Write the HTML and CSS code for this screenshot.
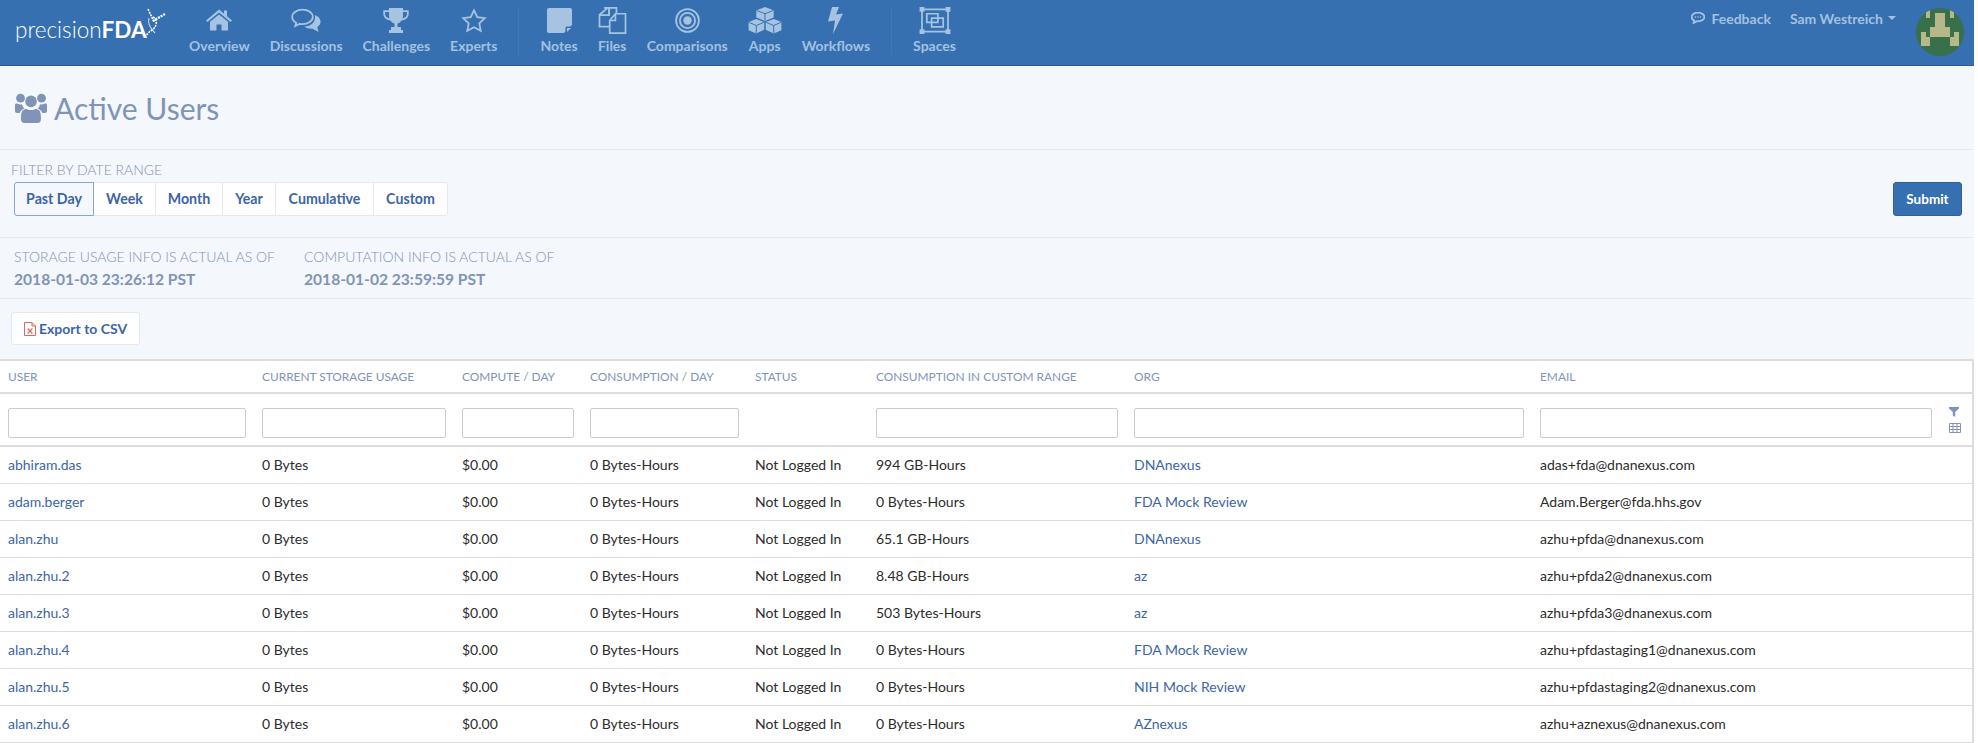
FILE: index.html
```html
<!DOCTYPE html>
<html lang="en">
<head>
  <meta charset="UTF-8">
  <title>precisionFDA - Active Users</title>
  <link rel="stylesheet" href="styles.css">
</head>
<body>

<div class="page">

  <nav class="navbar">
    <a class="brand">
      <span class="brand-light">precision</span><span class="brand-bold">FDA</span>
      <svg class="brand-mark" viewBox="0 0 22 30" width="22" height="30">
        <g fill="none" stroke="#fff" stroke-width="1.6">
          <path d="M4 1 L10 14" stroke-dasharray="2 1"/>
          <path d="M21 6 L9 13" stroke-width="2.2" stroke-dasharray="2 1"/>
          <path d="M9 9 C14 12 13 19 8 22 C5 24 3 26 1 29" stroke-dasharray="2 1"/>
          <path d="M5 10 C3 16 7 21 11 25" stroke-width="1.2" opacity=".7"/>
        </g>
      </svg>
    </a>

    <div class="nav-group">
      <a class="nav-item">
        <svg class="nav-icon" viewBox="0 0 26 22" width="26" height="22">
          <path class="solid" d="M13 0 L18 4.2 V1 H21 V6.8 L26 11 L24.6 12.4 L13 3 L1.4 12.4 L0 11 Z"/>
          <path class="solid" d="M13 5 L22 12.3 V21 H15.5 V15 H10.5 V21 H4 V12.3 Z"/>
        </svg>
        <span>Overview</span>
      </a>
      <a class="nav-item">
        <svg class="nav-icon" viewBox="0 0 30 24" width="30" height="24">
          <path class="line" d="M11.5 1.2 C5.8 1.2 1.2 4.4 1.2 8.4 C1.2 10.8 2.8 12.9 5.2 14.2 L4.2 17.6 L8.8 15.3 C9.7 15.5 10.6 15.6 11.5 15.6 C17.2 15.6 21.8 12.4 21.8 8.4 C21.8 4.4 17.2 1.2 11.5 1.2 Z"/>
          <path class="solid" d="M24 6.5 C27.4 8 29.6 10.4 29.6 13.2 C29.6 15.4 28.2 17.3 26.2 18.6 L27.6 23.4 L21.6 20.2 C18.6 20.4 15.4 19.6 13.4 18 C19.6 18 25 14 24 6.5 Z"/>
        </svg>
        <span>Discussions</span>
      </a>
      <a class="nav-item">
        <svg class="nav-icon" viewBox="0 0 26 25" width="26" height="25">
          <path class="solid" d="M6 0 H20 V8 C20 12 17 15 14.5 15.6 V19 H18 V22 H20 V25 H6 V22 H8 V19 H11.5 V15.6 C9 15 6 12 6 8 Z"/>
          <path class="line" d="M6 3.2 H1.2 V6 C1.2 9 4 11 7.5 11.6 M20 3.2 H24.8 V6 C24.8 9 22 11 18.5 11.6" stroke-width="2"/>
        </svg>
        <span>Challenges</span>
      </a>
      <a class="nav-item">
        <svg class="nav-icon" viewBox="0 0 26 25" width="26" height="25">
          <path class="line" d="M13 2.4 L16.3 9.2 L23.8 10.2 L18.3 15.4 L19.7 22.8 L13 19.2 L6.3 22.8 L7.7 15.4 L2.2 10.2 L9.7 9.2 Z" stroke-width="1.9"/>
        </svg>
        <span>Experts</span>
      </a>
    </div>

    <div class="nav-group">
      <a class="nav-item">
        <svg class="nav-icon" viewBox="0 0 25 25" width="25" height="25">
          <path class="solid" d="M2 0 H23 C24.2 0 25 .8 25 2 V17 L17 25 H2 C.8 25 0 24.2 0 23 V2 C0 .8 .8 0 2 0 Z"/>
          <path class="cut" d="M25 18.5 H20 C19 18.5 18.5 19 18.5 20 V25 H25 Z"/>
          <path class="solid" d="M24 20 L20 24 V20 Z"/>
        </svg>
        <span>Notes</span>
      </a>
      <a class="nav-item">
        <svg class="nav-icon" viewBox="0 0 29 28" width="29" height="28">
          <path class="line" d="M11 8.5 V.9 H18.6 V7 M5.8 .9 H11 M9.5 .9 L1 8 V20.4 H11" stroke-width="1.6"/>
          <path class="line" d="M11 .9 V8.4 H1" stroke-width="1.2"/>
          <path class="line" d="M17.5 7 H28 V27 H11.6 V14 Z" stroke-width="1.6"/>
          <path class="line" d="M17.5 7 V14 H11.6" stroke-width="1.2"/>
        </svg>
        <span>Files</span>
      </a>
      <a class="nav-item">
        <svg class="nav-icon" viewBox="0 0 25 25" width="25" height="25">
          <circle class="line" cx="12.5" cy="12.5" r="11.4" stroke-width="1.8"/>
          <circle class="line" cx="12.5" cy="12.5" r="7.6" stroke-width="1.8"/>
          <circle class="solid" cx="12.5" cy="12.5" r="4.2"/>
        </svg>
        <span>Comparisons</span>
      </a>
      <a class="nav-item">
        <svg class="nav-icon" viewBox="0 0 34 28" width="34" height="28">
          <path class="solid" d="M17 0 L26 3.4 V11 L17 14.4 L8 11 V3.4 Z"/>
          <path class="solid" d="M8 12.5 L16.2 15.6 V23.6 L8 27.6 L0 24 V15.6 Z"/>
          <path class="solid" d="M26 12.5 L34 15.6 V24 L26 27.6 L17.8 23.6 V15.6 Z"/>
          <path class="seam" d="M8.5 3.6 L17 7 L25.5 3.6 M17 7 V14 M.5 16 L8 19.2 L15.8 16 M8 19.2 V27 M18.2 16 L26 19.2 L33.5 16 M26 19.2 V27"/>
        </svg>
        <span>Apps</span>
      </a>
      <a class="nav-item">
        <svg class="nav-icon" viewBox="0 0 15 27" width="15" height="27">
          <path class="solid" d="M4 0 H11 L8 7.6 L15 6.6 L5 27 L7 13.4 L0 14.4 Z"/>
        </svg>
        <span>Workflows</span>
      </a>
    </div>

    <div class="nav-group nav-group-last">
      <a class="nav-item">
        <svg class="nav-icon" viewBox="0 0 32 28" width="32" height="28">
          <path class="line" d="M2.5 2.5 H29.5 V25.5 H2.5 Z" stroke-width="1.4"/>
          <path class="solid" d="M0 0 H5 V5 H0 Z M27 0 H32 V5 H27 Z M0 23 H5 V28 H0 Z M27 23 H32 V28 H27 Z"/>
          <path class="line" d="M7.5 7 H19 V16 H7.5 Z M12.5 11.5 H24.5 V20.5 H12.5 Z" stroke-width="1.5"/>
        </svg>
        <span>Spaces</span>
      </a>
    </div>

    <div class="nav-right">
      <a class="feedback">
        <svg viewBox="0 0 14 12" width="14" height="12">
          <path class="line" d="M7 .6 C3.4 .6 .6 2.6 .6 5 C.6 6.5 1.6 7.8 3.2 8.6 L2.6 11 L5.6 9.3 C6 9.4 6.5 9.4 7 9.4 C10.6 9.4 13.4 7.4 13.4 5 C13.4 2.6 10.6 .6 7 .6 Z" stroke-width="1"/>
          <circle class="solid" cx="4.4" cy="5" r=".8"/>
          <circle class="solid" cx="7" cy="5" r=".8"/>
          <circle class="solid" cx="9.6" cy="5" r=".8"/>
        </svg>
        Feedback
      </a>
      <a class="user-menu">Sam Westreich <i class="caret"></i></a>
      <svg class="avatar" viewBox="0 0 10 10" width="48" height="48" shape-rendering="crispEdges">
        <rect width="10" height="10" fill="#37704a"/>
        <path fill="#b7b88a" d="M2 0 H3 V2 H2 Z M7 0 H8 V2 H7 Z M4 1 H6 V4 H7 V6 H3 V4 H4 Z M1 5 H2 V6 H3 V8 H1 Z M8 5 H9 V8 H7 V6 H8 Z"/>
      </svg>
    </div>
  </nav>

  <div class="page-title">
    <svg class="title-icon" viewBox="0 0 32 30" width="32" height="30">
      <circle cx="5.5" cy="5.2" r="4.4"/>
      <circle cx="26.5" cy="5.2" r="4.4"/>
      <circle cx="16" cy="8.4" r="5.8"/>
      <path d="M0 12 C0 10.8 1 10.2 2 10.6 C3.4 11.4 5 11.6 7 11.2 C7.4 13 8.2 14.6 9.4 15.6 C7.4 16.4 5.4 18 4.6 20 H2 C.8 20 0 19.2 0 18 Z"/>
      <path d="M32 12 C32 10.8 31 10.2 30 10.6 C28.6 11.4 27 11.6 25 11.2 C24.6 13 23.8 14.6 22.6 15.6 C24.6 16.4 26.6 18 27.4 20 H30 C31.2 20 32 19.2 32 18 Z"/>
      <path d="M8.4 17 C10 16 11 15.6 12 16.2 C14.4 17.4 17.6 17.4 20 16.2 C21 15.6 22 16 23.6 17 C25.6 18.4 26 21 26 26 C26 28.6 24.6 30 22.6 30 H9.4 C7.4 30 6 28.6 6 26 C6 21 6.4 18.4 8.4 17 Z"/>
    </svg>
    <h1>Active Users</h1>
  </div>

  <section class="filter-section">
    <div>
      <label class="caps-label filter-label">Filter by date range</label>
      <div class="btn-group">
        <a class="range-btn is-active">Past Day</a>
        <a class="range-btn">Week</a>
        <a class="range-btn">Month</a>
        <a class="range-btn">Year</a>
        <a class="range-btn">Cumulative</a>
        <a class="range-btn">Custom</a>
      </div>
    </div>
    <button class="btn-submit">Submit</button>
  </section>

  <section class="info-section">
    <div class="info-block info-storage">
      <div class="caps-label">Storage usage info is actual as of</div>
      <div class="info-date">2018-01-03 23:26:12 PST</div>
    </div>
    <div class="info-block">
      <div class="caps-label">Computation info is actual as of</div>
      <div class="info-date">2018-01-02 23:59:59 PST</div>
    </div>
  </section>

  <section class="export-section">
    <a class="btn-export">
      <svg viewBox="0 0 12 14" width="12" height="14">
        <path d="M.5 .5 H8 L11.5 4 V13.5 H.5 Z M8 .5 V4 H11.5" fill="#fff" stroke="#d9695c" stroke-width="1"/>
        <path d="M3.6 6.5 L8.4 11.5 M8.4 6.5 L3.6 11.5" stroke="#d9695c" stroke-width="1.2"/>
      </svg>
      Export to CSV
    </a>
  </section>

  <table class="users-table">
    <colgroup>
      <col class="col-user"><col class="col-storage"><col class="col-compute"><col class="col-consumption"><col class="col-status"><col class="col-custom"><col class="col-org"><col class="col-email"><col>
    </colgroup>
    <thead>
      <tr class="head-row">
        <th>User</th>
        <th>Current Storage Usage</th>
        <th>Compute / Day</th>
        <th>Consumption / Day</th>
        <th>Status</th>
        <th>Consumption in Custom Range</th>
        <th>Org</th>
        <th>Email</th>
        <th></th>
      </tr>
      <tr class="filter-row">
        <td><input type="text"></td>
        <td><input type="text"></td>
        <td><input type="text"></td>
        <td><input type="text"></td>
        <td></td>
        <td><input type="text"></td>
        <td><input type="text"></td>
        <td><input type="text"></td>
        <td class="tools-cell">
          <svg viewBox="0 0 10 10" width="10" height="10">
            <path class="tool-solid" d="M0 0 H10 V1.6 L6.2 5 V10 L3.8 8.4 V5 L0 1.6 Z"/>
          </svg>
          <svg viewBox="0 0 12 10" width="12" height="10">
            <path class="tool-grid" d="M.5 .5 H11.5 V9.5 H.5 Z M.5 3.5 H11.5 M.5 6.5 H11.5 M4 .5 V9.5 M8 .5 V9.5"/>
          </svg>
        </td>
      </tr>
    </thead>
    <tbody>
      <tr><td><a>abhiram.das</a></td><td>0 Bytes</td><td>$0.00</td><td>0 Bytes-Hours</td><td>Not Logged In</td><td>994 GB-Hours</td><td><a>DNAnexus</a></td><td>adas+fda@dnanexus.com</td><td></td></tr>
      <tr><td><a>adam.berger</a></td><td>0 Bytes</td><td>$0.00</td><td>0 Bytes-Hours</td><td>Not Logged In</td><td>0 Bytes-Hours</td><td><a>FDA Mock Review</a></td><td>Adam.Berger@fda.hhs.gov</td><td></td></tr>
      <tr><td><a>alan.zhu</a></td><td>0 Bytes</td><td>$0.00</td><td>0 Bytes-Hours</td><td>Not Logged In</td><td>65.1 GB-Hours</td><td><a>DNAnexus</a></td><td>azhu+pfda@dnanexus.com</td><td></td></tr>
      <tr><td><a>alan.zhu.2</a></td><td>0 Bytes</td><td>$0.00</td><td>0 Bytes-Hours</td><td>Not Logged In</td><td>8.48 GB-Hours</td><td><a>az</a></td><td>azhu+pfda2@dnanexus.com</td><td></td></tr>
      <tr><td><a>alan.zhu.3</a></td><td>0 Bytes</td><td>$0.00</td><td>0 Bytes-Hours</td><td>Not Logged In</td><td>503 Bytes-Hours</td><td><a>az</a></td><td>azhu+pfda3@dnanexus.com</td><td></td></tr>
      <tr><td><a>alan.zhu.4</a></td><td>0 Bytes</td><td>$0.00</td><td>0 Bytes-Hours</td><td>Not Logged In</td><td>0 Bytes-Hours</td><td><a>FDA Mock Review</a></td><td>azhu+pfdastaging1@dnanexus.com</td><td></td></tr>
      <tr><td><a>alan.zhu.5</a></td><td>0 Bytes</td><td>$0.00</td><td>0 Bytes-Hours</td><td>Not Logged In</td><td>0 Bytes-Hours</td><td><a>NIH Mock Review</a></td><td>azhu+pfdastaging2@dnanexus.com</td><td></td></tr>
      <tr><td><a>alan.zhu.6</a></td><td>0 Bytes</td><td>$0.00</td><td>0 Bytes-Hours</td><td>Not Logged In</td><td>0 Bytes-Hours</td><td><a>AZnexus</a></td><td>azhu+aznexus@dnanexus.com</td><td></td></tr>
    </tbody>
  </table>

</div>

</body>
</html>
```

FILE: styles.css
```css
* {
  box-sizing: border-box;
}
body {
  margin: 0;
  padding-right: 4px;
  background-color: #fff;
  font-family: 'Lato', 'Liberation Sans', sans-serif;
  font-size: 14px;
  color: #2c2c2c;
}
.page {
  background-color: #f4f7fc;
}

/* navbar */
.navbar {
  display: flex;
  height: 66px;
  background-color: #3670b1;
  border-bottom: 1px solid #2b5a90;
}
.brand {
  display: flex;
  width: 179px;
  padding: 17px 0 0 15px;
  color: #fff;
  font-size: 22.5px;
  line-height: 26px;
}
.brand-light {
  font-weight: 300;
}
.brand-bold {
  font-weight: 700;
}
.brand-mark {
  margin: -9px 0 0 -3px;
}
.nav-group {
  display: flex;
  height: 48px;
  margin-top: 7px;
  padding-right: 11px;
  margin-right: 11px;
  border-right: 1px solid #4377b4;
}
.nav-group-last {
  border-right: none;
}
.nav-item {
  display: flex;
  flex-direction: column;
  align-items: center;
  padding: 0 10px;
  color: #a3c2e0;
  font-size: 14px;
  font-weight: 700;
  line-height: 18px;
}
.nav-icon {
  display: block;
  height: 28px;
  margin-bottom: 3px;
}
.solid {
  fill: #a6c4e1;
}
.line {
  fill: none;
  stroke: #a6c4e1;
  stroke-width: 1.8;
}
.cut {
  fill: #3670b1;
}
.seam {
  fill: none;
  stroke: #3670b1;
  stroke-width: 1;
}
.nav-right {
  display: flex;
  margin-left: auto;
  padding: 8px 10px 0 0;
  color: #a3c2e0;
  font-weight: 700;
}
.feedback {
  display: flex;
  gap: 6px;
  height: 20px;
  margin-right: 19px;
  align-items: center;
}
.user-menu {
  display: flex;
  gap: 5px;
  height: 20px;
  margin-right: 20px;
  align-items: center;
}
.caret {
  width: 0;
  height: 0;
  border-left: 4px solid transparent;
  border-right: 4px solid transparent;
  border-top: 4px solid #a3c2e0;
}
.avatar {
  border-radius: 50%;
}

/* title */
.page-title {
  display: flex;
  align-items: center;
  gap: 7px;
  height: 84px;
  padding-left: 15px;
  border-bottom: 1px solid #e3eaf4;
}
.title-icon {
  fill: #8094b8;
}
h1 {
  margin: 0;
  color: #8094b8;
  font-size: 30px;
  font-weight: 400;
}

/* sections */
.caps-label {
  display: block;
  color: #8392ae;
  font-size: 14px;
  font-weight: 300;
  line-height: 16px;
  text-transform: uppercase;
}
.filter-section {
  display: flex;
  justify-content: space-between;
  align-items: flex-end;
  height: 88px;
  padding: 12px 12px 21px 11px;
  border-bottom: 1px solid #e3eaf4;
}
.filter-label {
  margin-bottom: 4px;
}
.btn-group {
  display: flex;
  margin-left: 3px;
  height: 34px;
  background-color: #fff;
  border: 1px solid #e2e9f3;
  border-radius: 3px;
}
.range-btn {
  display: flex;
  align-items: center;
  justify-content: center;
  width: 62px;
  padding-bottom: 2px;
  color: #3c65a6;
  font-size: 14.2px;
  font-weight: 700;
  border-right: 1px solid #e2e9f3;
}
.range-btn:nth-child(1) {
  width: 80px;
}
.range-btn:nth-child(3) {
  width: 67px;
}
.range-btn:nth-child(4) {
  width: 53px;
}
.range-btn:nth-child(5) {
  width: 98px;
}
.range-btn:nth-child(6) {
  width: 73px;
  border-right: none;
}
.is-active {
  margin: -1px 0 -1px -1px;
  background-color: #f4f7fc;
  border: 1px solid #86a7d2;
  border-radius: 3px 0 0 3px;
}
.btn-submit {
  width: 69px;
  height: 34px;
  padding: 0;
  background-color: #3670b1;
  border: 1px solid #2f6199;
  border-radius: 3px;
  color: #fff;
  font-family: inherit;
  font-size: 13.5px;
  font-weight: 700;
}
.info-section {
  display: flex;
  height: 61px;
  padding: 11px 0 0 14px;
  border-bottom: 1px solid #e3eaf4;
}
.info-storage {
  width: 290px;
}
.info-date {
  margin-top: 4px;
  color: #8094b8;
  font-size: 15.6px;
  font-weight: 700;
  line-height: 20px;
}
.export-section {
  height: 60px;
  padding: 13px 0 0 11px;
}
.btn-export {
  display: inline-flex;
  align-items: center;
  gap: 3px;
  width: 129px;
  height: 33px;
  padding-left: 12px;
  background-color: #fff;
  border: 1px solid #e2e9f3;
  border-radius: 3px;
  color: #3c65a6;
  font-size: 14px;
  font-weight: 700;
}

/* table */
.users-table {
  width: 100%;
  table-layout: fixed;
  border-collapse: separate;
  border-spacing: 0;
  background-color: #fff;
  border-top: 2px solid #ddd;
  border-right: 2px solid #ddd;
}
.col-user { width: 254px; }
.col-storage { width: 200px; }
.col-compute { width: 128px; }
.col-consumption { width: 165px; }
.col-status { width: 121px; }
.col-custom { width: 258px; }
.col-org { width: 406px; }
.col-email { width: 408px; }
.users-table th {
  height: 33px;
  padding: 0 0 0 8px;
  color: #8094b8;
  font-size: 11.9px;
  font-weight: 400;
  text-align: left;
  text-transform: uppercase;
  white-space: nowrap;
  border-bottom: 2px solid #ddd;
}
.users-table td {
  height: 37px;
  padding: 0 0 2px 8px;
  border-bottom: 1px solid #ddd;
  white-space: nowrap;
}
.users-table a {
  color: #3c65a6;
}
.users-table .filter-row td {
  height: 53px;
  padding: 7px 8px 0 8px;
  border-bottom: 2px solid #ddd;
}
.filter-row input {
  display: block;
  width: 100%;
  height: 30px;
  background-color: #fff;
  border: 1px solid #ccc;
  border-radius: 2px;
}
.users-table .tools-cell {
  padding: 4px 0 0 6px;
}
.tools-cell svg {
  display: block;
  margin: 0 0 6px 1px;
}
.tool-solid {
  fill: #8094b8;
}
.tool-grid {
  fill: none;
  stroke: #8094b8;
  stroke-width: 1;
}
```
